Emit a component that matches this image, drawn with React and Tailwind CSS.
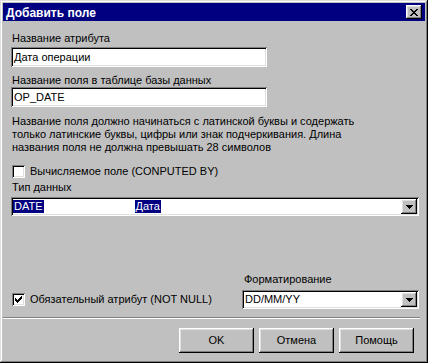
import React from "react";

const sunken =
  "shadow-[inset_1px_1px_#808080,inset_-1px_-1px_#ffffff,inset_2px_2px_#000000,inset_-2px_-2px_#dfdfdf]";
const raised =
  "shadow-[inset_-1px_-1px_#000000,inset_1px_1px_#ffffff,inset_-2px_-2px_#808080,inset_2px_2px_#dfdfdf]";

function CloseGlyph() {
  const rows = [
    [[0, 2], [6, 2]],
    [[1, 2], [5, 2]],
    [[2, 4]],
    [[3, 2]],
    [[2, 4]],
    [[1, 2], [5, 2]],
    [[0, 2], [6, 2]],
  ];
  return (
    <svg width="8" height="7" viewBox="0 0 8 7" shapeRendering="crispEdges">
      {rows.map((r, y) =>
        r.map(([x, w], i) => <rect key={y + "-" + i} x={x} y={y} width={w} height={1} fill="#000" />)
      )}
    </svg>
  );
}

function Arrow() {
  return (
    <svg width="7" height="4" viewBox="0 0 7 4" shapeRendering="crispEdges">
      <rect x="0" y="0" width="7" height="1" fill="#000" />
      <rect x="1" y="1" width="5" height="1" fill="#000" />
      <rect x="2" y="2" width="3" height="1" fill="#000" />
      <rect x="3" y="3" width="1" height="1" fill="#000" />
    </svg>
  );
}

function Check() {
  return (
    <svg width="7" height="7" viewBox="0 0 7 7" shapeRendering="crispEdges">
      <rect x="6" y="0" width="1" height="3" fill="#000" />
      <rect x="5" y="1" width="1" height="3" fill="#000" />
      <rect x="4" y="2" width="1" height="3" fill="#000" />
      <rect x="3" y="3" width="1" height="3" fill="#000" />
      <rect x="2" y="4" width="1" height="3" fill="#000" />
      <rect x="1" y="3" width="1" height="3" fill="#000" />
      <rect x="0" y="2" width="1" height="3" fill="#000" />
    </svg>
  );
}

function CheckBox({ checked, label }) {
  return (
    <div className="flex items-center h-[13px]">
      <div className={"w-[13px] h-[13px] bg-white flex items-center justify-center " + sunken}>
        {checked ? <Check /> : null}
      </div>
      <span className="ml-[5px] leading-[13px]">{label}</span>
    </div>
  );
}

function DropButton() {
  return (
    <div className={"w-[16px] h-full bg-[#c0c0c0] flex items-center justify-center " + raised}>
      <Arrow />
    </div>
  );
}

function Button({ children }) {
  return (
    <div className={"w-[75px] h-[25px] flex items-center justify-center bg-[#c0c0c0] " + raised}>
      {children}
    </div>
  );
}

export default function App() {
  return (
    <div
      className="w-[428px] h-[363px] bg-[#c0c0c0] p-[3px] flex flex-col text-[11px] text-black shadow-[inset_-1px_-1px_#000000,inset_1px_1px_#dfdfdf,inset_-2px_-2px_#808080,inset_2px_2px_#ffffff]"
      style={{ fontFamily: '"Liberation Sans", Arial, sans-serif' }}
    >
      <div className="h-[18px] bg-[#000080] flex items-center justify-between pl-[3px] pr-[3px]">
        <span className="text-white font-bold text-[12px] leading-[18px] pt-[1px]">Добавить поле</span>
        <div className={"w-[16px] h-[14px] bg-[#c0c0c0] flex items-center justify-center " + raised}>
          <CloseGlyph />
        </div>
      </div>

      <div className="flex flex-col pl-[8px] pr-[6px]">
        <div className="mt-[11px] leading-[13px] pl-[1px]">Название атрибута</div>
        <div className={"mt-[2px] w-[256px] h-[20px] bg-white flex items-center pl-[3px] " + sunken}>
          Дата операции
        </div>
        <div className="mt-[7px] leading-[13px] pl-[1px]">Название поля в таблице базы данных</div>
        <div className={"w-[256px] h-[20px] bg-white flex items-center pl-[3px] " + sunken}>OP_DATE</div>

        <div className="mt-[8px] leading-[13px] pl-[1px]">
          Название поля должно начинаться с латинской буквы и содержать
          <br />
          только латинские буквы, цифры или знак подчеркивания. Длина
          <br />
          названия поля не должна превышать 28 символов
        </div>

        <div className="mt-[11px] pl-[1px]">
          <CheckBox checked={false} label="Вычисляемое поле (CONPUTED BY)" />
        </div>

        <div className="mt-[3px] leading-[13px] pl-[1px]">Тип данных</div>
        <div className={"mt-[3px] h-[19px] bg-white flex items-stretch p-[2px] " + sunken}>
          <div className="flex-1 flex items-center">
            <span className="bg-[#000080] text-white leading-[13px] pl-[1px] pr-[1px]">DATE</span>
            <span className="ml-[91px] bg-[#000080] text-white leading-[13px] pl-[1px] pr-[1px]">Дата</span>
          </div>
          <DropButton />
        </div>

        <div className="mt-[57px] flex justify-between items-end">
          <div className="pl-[1px] mb-[3px]">
            <CheckBox checked label="Обязательный атрибут (NOT NULL)" />
          </div>
          <div className="w-[177px] flex flex-col">
            <div className="leading-[13px] pl-[2px]">Форматирование</div>
            <div className={"mt-[4px] h-[19px] bg-white flex items-stretch p-[2px] " + sunken}>
              <div className="flex-1 flex items-center pl-[1px]">DD/MM/YY</div>
              <DropButton />
            </div>
          </div>
        </div>
      </div>

      <div className="mt-[8px] mr-[5px] h-[2px] border-t border-t-[#808080] border-b border-b-white" />

      <div className="mt-[9px] flex justify-end gap-[5px] pr-[11px]">
        <Button>OK</Button>
        <Button>Отмена</Button>
        <Button>Помощь</Button>
      </div>
    </div>
  );
}
